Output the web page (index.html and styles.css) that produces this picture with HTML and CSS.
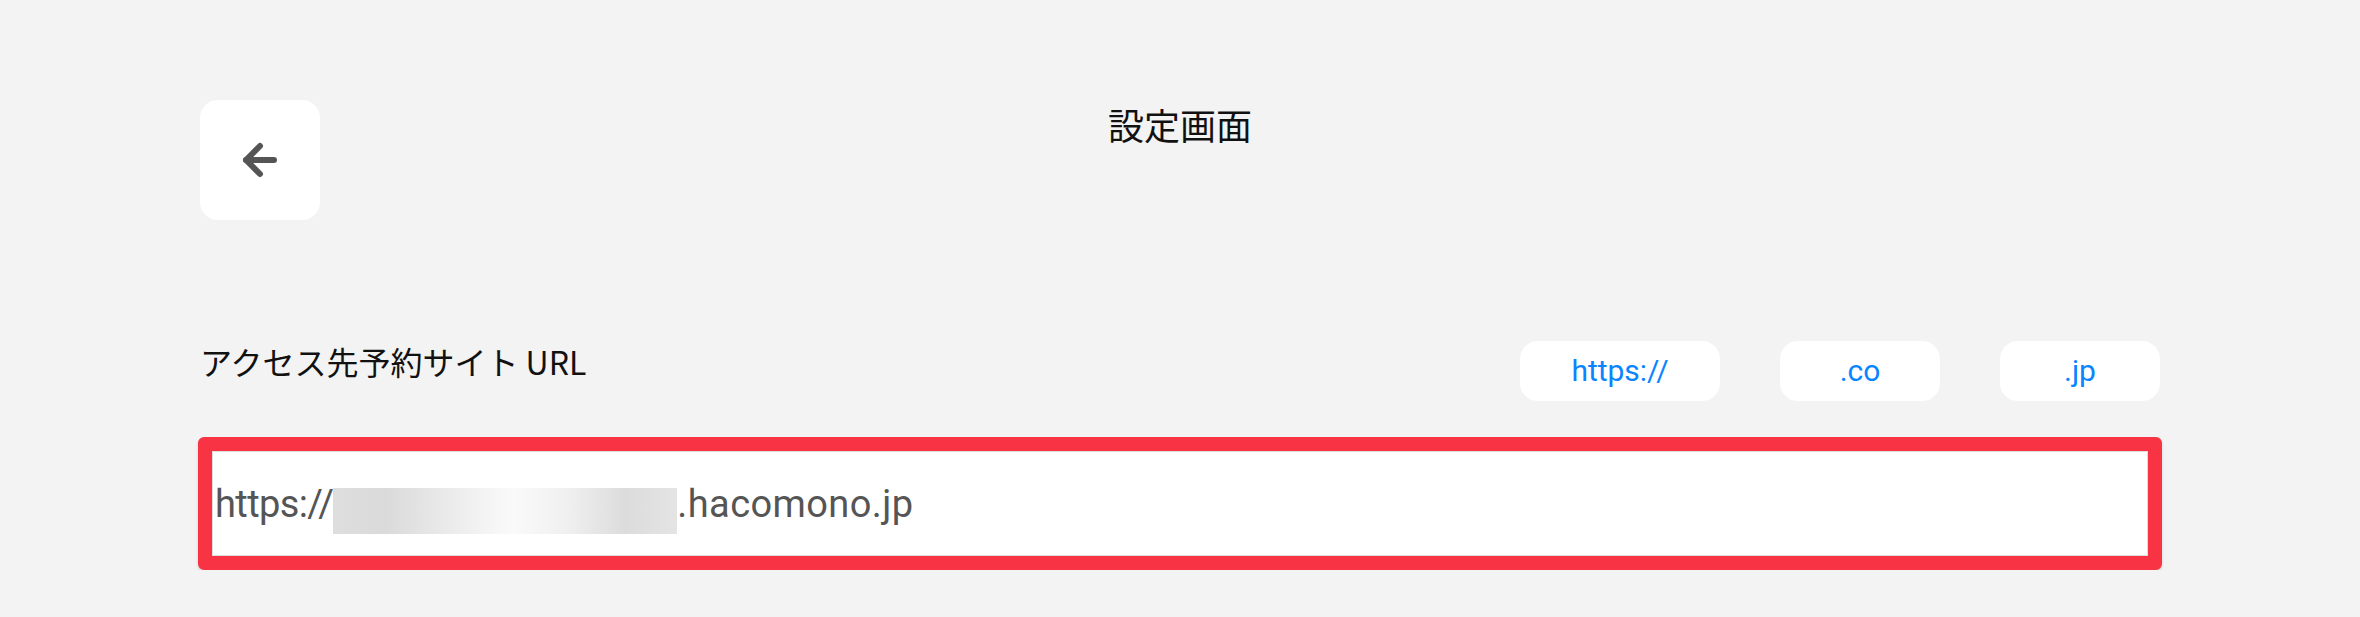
FILE: index.html
```html
<!DOCTYPE html>
<html lang="ja">
<head>
<meta charset="utf-8">
<title>設定画面</title>
<link rel="stylesheet" href="styles.css">
</head>
<body>
<main class="page">
  <header class="header">
    <button class="back-btn" type="button" aria-label="戻る">
      <svg class="back-icon" viewBox="0 0 24 24" width="48" height="48" fill="none" stroke="#555555" stroke-width="3" stroke-linecap="round" stroke-linejoin="round">
        <line x1="5" y1="12" x2="19" y2="12"/>
        <polyline points="12,5 5,12 12,19"/>
      </svg>
    </button>
    <h1 class="title">設定画面</h1>
    <div class="spacer"></div>
  </header>

  <section class="field">
    <div class="field-row">
      <label class="field-label">アクセス先予約サイト URL</label>
      <div class="chips">
        <button class="chip chip-wide" type="button">https://</button>
        <button class="chip" type="button">.co</button>
        <button class="chip" type="button">.jp</button>
      </div>
    </div>
    <div class="input-highlight">
      <div class="input">
        <span class="input-text input-scheme">https://</span><span class="redacted"></span><span class="input-text input-domain">.hacomono.jp</span>
      </div>
    </div>
  </section>
</main>
</body>
</html>
```

FILE: styles.css
```css
* {
  box-sizing: border-box;
}

html, body {
  margin: 0;
  padding: 0;
  background: #f3f3f3;
}

body {
  font-family: "Noto Sans CJK JP", "Noto Sans", sans-serif;
  color: #111111;
}

.page {
  padding: 100px 200px 0;
}

.header {
  display: grid;
  grid-template-columns: 120px 1fr 120px;
  align-items: start;
}

.back-btn {
  width: 120px;
  height: 120px;
  border: none;
  border-radius: 18px;
  background: #ffffff;
  display: flex;
  align-items: center;
  justify-content: center;
  padding: 0;
  margin: 0;
}

.back-icon {
  display: block;
}

.title {
  margin: 0;
  text-align: center;
  font-size: 36px;
  line-height: 48px;
  font-weight: 400;
  color: #111111;
}

.field {
  margin-top: 121px;
}

.field-row {
  display: flex;
  justify-content: space-between;
  align-items: flex-start;
}

.field-label {
  font-size: 32px;
  line-height: 40px;
  font-weight: 400;
  color: #111111;
}

.chips {
  display: flex;
  gap: 60px;
}

.chip {
  width: 160px;
  height: 60px;
  border: none;
  border-radius: 18px;
  background: #ffffff;
  color: #0a84ff;
  font-family: Roboto, "Noto Sans", sans-serif;
  font-size: 30px;
  line-height: 60px;
  padding: 0;
  margin: 0;
  text-align: center;
}

.chip-wide {
  width: 200px;
}

.input-highlight {
  margin: 36px -2px 0;
  border: 14px solid #f83343;
  border-radius: 6px;
  box-shadow: 0 2px 3px rgba(0, 0, 0, 0.12);
}

.input {
  height: 105px;
  background: #ffffff;
  border: 1px solid #dcdcdc;
  display: flex;
  align-items: center;
  padding-left: 2px;
  font-family: Roboto, "Noto Sans", sans-serif;
  font-size: 38px;
  color: #555555;
  white-space: nowrap;
}

.input-text {
  line-height: 46px;
}

.input-scheme {
  letter-spacing: -0.6px;
}

.input-domain {
  letter-spacing: 0.4px;
}

.redacted {
  display: inline-block;
  width: 344px;
  height: 46px;
  margin-top: 14px;
  background: linear-gradient(90deg, #dedede 0%, #dadada 15%, #ececec 35%, #fafafa 52%, #f0f0f0 68%, #dcdcdc 85%, #e4e4e4 100%);
}
```
